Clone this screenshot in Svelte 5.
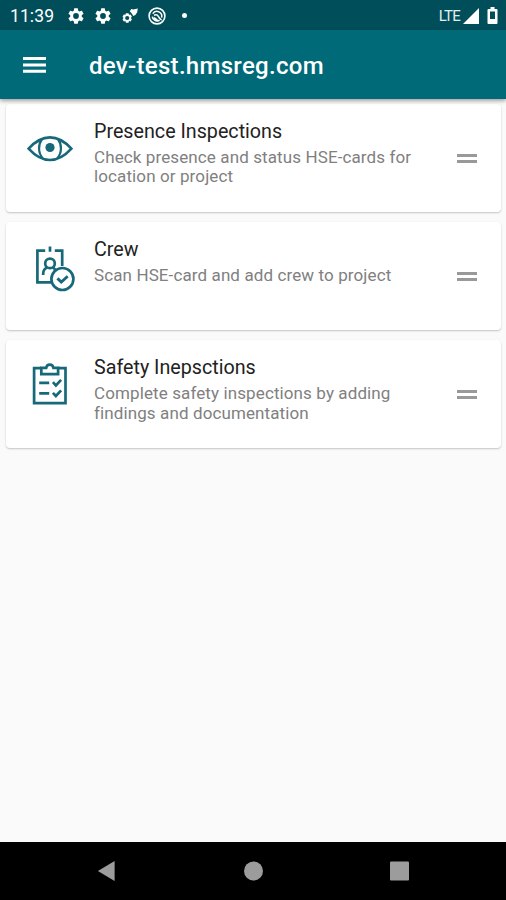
<script>
  const cards = [
    { icon: 'eye', title: 'Presence Inspections', lines: ['Check presence and status HSE-cards for', 'location or project'] },
    { icon: 'crew', title: 'Crew', lines: ['Scan HSE-card and add crew to project'] },
    { icon: 'clipboard', title: 'Safety Inepsctions', lines: ['Complete safety inspections by adding', 'findings and documentation'] }
  ];
  const gearPath = 'M19.14 12.94c.04-.3.06-.61.06-.94s-.02-.64-.07-.94l2.03-1.58a.49.49 0 0 0 .12-.61l-1.92-3.32a.49.49 0 0 0-.59-.22l-2.39.96c-.5-.38-1.03-.7-1.62-.94l-.36-2.54A.48.48 0 0 0 13.92 2.4h-3.84c-.24 0-.43.17-.47.41l-.36 2.54c-.59.24-1.13.57-1.62.94l-2.39-.96a.48.48 0 0 0-.59.22L2.74 8.87a.48.48 0 0 0 .12.61l2.03 1.58c-.05.3-.09.63-.09.94s.02.64.07.94l-2.03 1.58a.49.49 0 0 0-.12.61l1.92 3.32c.12.22.37.29.59.22l2.39-.96c.5.38 1.03.7 1.62.94l.36 2.54c.05.24.24.41.48.41h3.84c.24 0 .44-.17.47-.41l.36-2.54c.59-.24 1.13-.56 1.62-.94l2.39.96c.22.08.47 0 .59-.22l1.92-3.32a.48.48 0 0 0-.12-.61zM12 15.6A3.6 3.6 0 1 1 12 8.4a3.6 3.6 0 0 1 0 7.2z';
</script>

{#snippet gear()}
  <svg class="gear" viewBox="2 2 20 20"><path d={gearPath} /></svg>
{/snippet}

<div class="screen">
  <div class="status">
    <span class="time">11:39</span>
    {@render gear()}
    {@render gear()}
    <svg class="keys" viewBox="0 0 16 16">
      <path fill-rule="evenodd" d="M3.9 5.3h2.6l.5 1.5 1.6-.3 1.3 2.2-1.1 1.3 1.1 1.2-1.3 2.2-1.6-.3-.5 1.6H3.9l-.5-1.6-1.6.3L.5 11.2l1.1-1.2L.5 8.7 1.8 6.5l1.6.3zM5.2 7.9a2.1 2.1 0 1 0 0 4.2 2.1 2.1 0 0 0 0-4.2z" />
      <path d="M7.8 3.2 9.3.9l2 .6L15.8.4l-.6 3.8-1.8 2.7-2.2 1.2-1.4-2.5z" />
    </svg>
    <svg class="sync" viewBox="0 0 18 18" fill="none" stroke="#fff">
      <circle cx="9" cy="9" r="7.9" stroke-width="1.6" />
      <path stroke-width="1.6" d="M4.8 6.6A4.9 4.9 0 0 1 13.6 10.6M11.6 13.2A4.9 4.9 0 0 1 4.3 9.6M6 8.2Q9 6.8 10.5 9.6T13.6 13M6 10.6l3.4 2.6" />
    </svg>
    <i class="dot"></i>
    <span class="lte">LTE</span>
    <svg class="signal" viewBox="0 0 16 16"><path d="M16 0v16H0z" /></svg>
    <svg class="battery" viewBox="0 0 11 17"><path fill-rule="evenodd" d="M3.5 0h4v2H9.5q1 0 1 1v13q0 1-1 1H1.5q-1 0-1-1V3q0-1 1-1h2zM3 4.5V12h5V4.5z" /></svg>
  </div>
  <header>
    <svg class="menu" viewBox="0 0 23 16"><path d="M0 0h23v3H0zM0 6.4h23v3H0zM0 12.8h23v3H0z" /></svg>
    <h1>dev-test.hmsreg.com</h1>
  </header>
  <main>
    {#each cards as card}
      <article>
        <div class="icon">
          {#if card.icon === 'eye'}
            <svg class="eye" viewBox="0 0 46 26" stroke-width="2.6">
              <path d="M1.6 12.6Q12 1.4 23 1.4T44.4 12.6Q34 24 23 24T1.6 12.6z" />
              <path stroke-width="2.2" d="M14.8 3.5C11 8.5 11 17 15.7 22.2M31.2 3.5C35 8.5 35 17 30.3 22.2" />
              <circle cx="23" cy="11.5" r="4.6" fill="#17697a" stroke="none" />
            </svg>
          {:else if card.icon === 'crew'}
            <svg class="crew" viewBox="0 0 40 47" stroke-width="2.7">
              <path d="M10.2 5.6H2.4V37.4H16M19.8 5.6H27.2V21M15 1.4V6.8" />
              <circle cx="15" cy="18.4" r="4.8" />
              <path d="M8.2 30v-1.6Q8.4 24 12 22.8M17.8 22.6Q20 23.6 20.2 25.6" />
              <circle cx="27.4" cy="34" r="11" fill="#fff" />
              <path stroke-width="2.9" d="m22.4 33.4 3.9 3.7 6.4-5.8" />
            </svg>
          {:else}
            <svg class="clipboard" viewBox="0 0 36 43" stroke-width="2.7">
              <path d="M9 5.2H2.1V40.2H33.5V5.2H26.2" />
              <path d="M9.3 11.2V4.8H14.2Q14.8 1.6 17.8 1.6T21.4 4.8H26.1V11.2z" />
              <path d="M7.2 19.8H17.2M7.2 30.4H17.2M20.9 19.2l3 3.2 5.2-5.6M20.9 29.8l3 3.2 5.2-5.6" />
            </svg>
          {/if}
        </div>
        <div class="text">
          <h2>{card.title}</h2>
          {#each card.lines as line}<p>{line}</p>{/each}
        </div>
        <div class="handle"></div>
      </article>
    {/each}
  </main>
  <nav>
    <svg viewBox="0 0 18 21"><path d="M17.5 0v21L0 10.5z" /></svg>
    <svg viewBox="0 0 18 18"><circle cx="9" cy="9" r="9" /></svg>
    <svg viewBox="0 0 19 19"><rect width="19" height="19" rx="1" /></svg>
  </nav>
</div>

<style>
  .screen { width: 506px; height: 900px; display: flex; flex-direction: column; background: #fafafa; font-family: Roboto, sans-serif; overflow: hidden; }
  svg { display: block; flex: none; }
  .status { height: 30px; flex: none; display: flex; align-items: center; background: #004e5a; color: #fff; padding: 1px 8px 0 10px; box-sizing: border-box; }
  .status svg, .menu { fill: #fff; }
  .status .sync { fill: none; width: 18px; height: 18px; margin-left: 10px; }
  .time { width: 58px; font-size: 17.5px; letter-spacing: 0.1px; padding-top: 1px; }
  .gear { width: 16px; height: 16px; margin-right: 11px; }
  .keys { width: 16px; height: 16px; }
  .dot { width: 5px; height: 5px; border-radius: 50%; background: #fff; margin-left: 16px; }
  .lte { margin-left: auto; font-size: 15px; letter-spacing: -0.8px; color: #e2edef; }
  .signal { width: 16px; height: 16px; margin-left: 3px; }
  .battery { width: 11px; height: 17px; margin-left: 8px; }
  header { height: 68.5px; flex: none; display: flex; align-items: center; background: #006a79; color: #fff; padding-left: 23px; box-sizing: border-box; box-shadow: 0 2px 4px rgba(0, 0, 0, 0.35); z-index: 1; }
  .menu { width: 23px; height: 16px; margin-top: 1px; }
  h1 { margin: 3px 0 0 43px; font-size: 24px; letter-spacing: 0.3px; line-height: 28px; font-weight: 500; }
  main { flex: 1; padding: 5px 5px 0 6px; display: flex; flex-direction: column; gap: 10.3px; }
  article { height: 108px; box-sizing: border-box; display: flex; background: #fff; border-radius: 4px; box-shadow: 0 1px 2px rgba(0, 0, 0, 0.22); padding: 16px 24px 0 0; }
  .icon { width: 88px; flex: none; }
  .icon svg { fill: none; stroke: #17697a; }
  .eye { width: 46px; height: 26px; margin: 16px 0 0 21px; }
  .crew { width: 40px; height: 47px; margin: 7px 0 0 29px; }
  .clipboard { width: 36px; height: 43px; margin: 7px 0 0 26px; }
  .text { flex: 1; white-space: nowrap; }
  h2 { margin: 0 0 4.2px; font-size: 19.7px; line-height: 24px; font-weight: 400; color: #222; }
  p { margin: 0; font-size: 17px; letter-spacing: 0.11px; line-height: 19.6px; color: #808080; }
  .handle { width: 20px; height: 3px; border: solid #999; border-width: 3px 0; margin-top: 34px; }
  nav { height: 58px; flex: none; display: flex; align-items: center; justify-content: space-between; background: #000; padding: 0 97px; box-sizing: border-box; }
  nav svg { fill: #9c9c9c; width: 19px; height: 20px; }
</style>
